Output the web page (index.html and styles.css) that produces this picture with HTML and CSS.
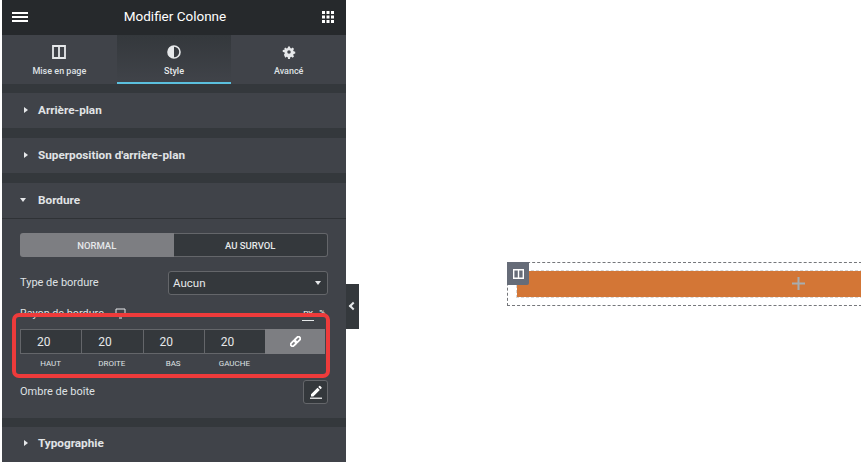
FILE: index.html
```html
<!DOCTYPE html>
<html lang="fr">
<head>
  <meta charset="UTF-8" />
  <meta name="viewport" content="width=device-width, initial-scale=1.0"/>
  <title>Modifier Colonne</title>
  <link rel="stylesheet" href="styles.css">
</head>
<body>

  <aside class="panel">
    <header class="panel-head">
      <svg class="head-icon" width="16" height="12" viewBox="0 0 16 12"><path d="M0 1h16v2H0zM0 5h16v2H0zM0 9h16v2H0z" fill="#fff"/></svg>
      <h1>Modifier Colonne</h1>
      <svg class="head-icon" width="12" height="12" viewBox="0 0 12 12" fill="#fff"><path d="M0 0h3v3H0zM4.500 0h3v3h-3zM9 0h3v3H9zM0 4.500h3v3H0zM4.500 4.500h3v3h-3zM9 4.500h3v3H9zM0 9h3v3H0zM4.500 9h3v3h-3zM9 9h3v3H9z"/></svg>
    </header>

    <nav class="tabs">
      <div class="tab">
        <svg width="14" height="14" viewBox="0 0 14 14"><path d="M1 1h12v12H1zM7 1v12" fill="none" stroke="#e6e8ea" stroke-width="1.800"/></svg>
        <span>Mise en page</span>
      </div>
      <div class="tab active">
        <svg width="14" height="14" viewBox="0 0 14 14"><circle cx="7" cy="7" r="6" fill="none" stroke="#e6e8ea" stroke-width="1.600"/><path d="M7 1a6 6 0 0 0 0 12z" fill="#e6e8ea"/></svg>
        <span>Style</span>
      </div>
      <div class="tab">
        <svg width="14" height="14" viewBox="0 0 14 14"><path d="M5.800 0h2.400l.4 2 1.300.6 1.800-1.100 1.600 1.700-1.100 1.700.6 1.300 2 .4v2.400l-2 .4-.6 1.300 1.100 1.700-1.600 1.700-1.800-1.100-1.300.6-.4 2H5.800l-.4-2-1.300-.6-1.800 1.100L.7 10.400l1.100-1.700-.6-1.300-2-.4V4.600l2-.4.600-1.300L.7 3.200l1.600-1.700 1.800 1.100 1.300-.6zM7 4.800a2.200 2.200 0 1 0 0 4.400 2.200 2.200 0 0 0 0-4.400z" fill="#e6e8ea" fill-rule="evenodd" transform="translate(1.400 1.400) scale(.8)"/></svg>
        <span>Avancé</span>
      </div>
    </nav>

    <section class="group">
      <div class="group-title"><i class="caret"></i>Arrière-plan</div>
    </section>

    <section class="group">
      <div class="group-title"><i class="caret"></i>Superposition d'arrière-plan</div>
    </section>

    <section class="group">
      <div class="group-title open"><i class="caret down"></i>Bordure</div>
      <div class="group-body">
        <div class="switch">
          <div class="switch-item on">NORMAL</div>
          <div class="switch-item">AU SURVOL</div>
        </div>

        <div class="row row-type">
          <label>Type de bordure</label>
          <div class="select">Aucun<i class="caret down"></i></div>
        </div>

        <div class="row row-radius">
          <label>Rayon de bordure</label>
          <svg width="11" height="11" viewBox="0 0 11 11"><path d="M1 1h9v7H1zM4 10h3" fill="none" stroke="#e6e8ea"/></svg>
          <span class="unit">PX</span>
          <span class="unit-alt">%</span>
        </div>

        <div class="dims">
          <div class="dim"><div class="dim-value">20</div><span>HAUT</span></div>
          <div class="dim"><div class="dim-value">20</div><span>DROITE</span></div>
          <div class="dim"><div class="dim-value">20</div><span>BAS</span></div>
          <div class="dim"><div class="dim-value">20</div><span>GAUCHE</span></div>
          <div class="dim-link">
            <svg width="11" height="11" viewBox="0 0 12 12"><g transform="rotate(-45 6 6)" fill="none" stroke="#fff" stroke-width="2"><rect x="-.5" y="4" width="7" height="4" rx="2"/><rect x="5.500" y="4" width="7" height="4" rx="2"/></g></svg>
          </div>
        </div>

        <div class="row row-shadow">
          <label>Ombre de boîte</label>
          <div class="edit-btn">
            <svg width="14" height="14" viewBox="0 0 14 14" fill="#fff"><path d="M2 9.200L8.500 2.700l2.300 2.300-6.500 6.500H2zM9.300 1.900l.9-.9a.7.7 0 0 1 1 0l1.300 1.300a.7.7 0 0 1 0 1l-.9.900z"/><path d="M1 12.600h12v1.200H1z"/></svg>
          </div>
        </div>
      </div>
    </section>

    <section class="group">
      <div class="group-title last"><i class="caret"></i>Typographie</div>
    </section>

    <div class="highlight"></div>
    <div class="collapse"><i></i></div>
  </aside>

  <main class="canvas">
    <div class="column">
      <div class="column-handle">
        <svg width="11" height="10" viewBox="0 0 11 10"><path d="M.7.700h9.600v8.600H.7zM5.500.700v8.600" fill="none" stroke="#fff" stroke-width="1.400"/></svg>
      </div>
      <div class="column-inner">
        <svg width="13" height="13" viewBox="0 0 13 13"><path d="M5.500 0h2v5.500H13v2H7.500V13h-2V7.500H0v-2h5.500z" fill="#a7adb0"/></svg>
      </div>
    </div>
  </main>

</body>
</html>
```

FILE: styles.css
```css
* {
  box-sizing: border-box;
}
html, body {
  margin: 0;
  height: 462px;
  overflow: hidden;
}
body {
  display: flex;
  background: #fff;
  font-family: Roboto, "Liberation Sans", sans-serif;
  color: #e6e8ea;
  padding-left: 2px;
}
.panel {
  position: relative;
  width: 344px;
  height: 462px;
  flex: none;
  background: #34383c;
}
.panel-head {
  height: 35px;
  background: #26292c;
  display: flex;
  align-items: center;
  justify-content: space-between;
  padding: 0 12px 1px 10px;
}
.panel-head h1 {
  margin: 0 0 2px;
  font-size: 13.500px;
  font-weight: 400;
  color: #fff;
}
.tabs {
  height: 49px;
  display: flex;
  background: #404349;
}
.tab {
  flex: 1;
  display: flex;
  flex-direction: column;
  align-items: center;
  padding-top: 10px;
  gap: 7px;
  font-size: 9px;
  font-weight: 500;
  color: #dfe1e4;
}
.tab.active {
  background: linear-gradient(#34383c, #404349);
  border-bottom: 2px solid #5bc0de;
  color: #e6e8ea;
}
.group {
  margin-top: 9px;
  background: #404349;
}
.group + .group {
  margin-top: 10px;
}
.group:last-of-type {
  margin-top: 9px;
}
.group-title {
  height: 35px;
  display: flex;
  align-items: center;
  padding: 0 0 2px 22px;
  font-size: 11.750px;
  font-weight: 700;
  color: #e0e3e6;
}
.group-title.open {
  height: 36px;
  border-bottom: 1px solid #2f3236;
}
.group-title.last {
  padding-bottom: 4px;
}
.caret {
  width: 0;
  height: 0;
  margin-right: 10px;
  border-style: solid;
  border-color: transparent;
  border-width: 3.500px 0 3.500px 4px;
  border-left-color: #e6e8ea;
}
.caret.down {
  margin-left: -4px;
  margin-right: 12px;
  border-width: 4px 3.500px 0 3.500px;
  border-color: #e6e8ea transparent transparent;
}
.group-body {
  height: 199px;
  padding: 14px 18px 0;
}
.switch {
  height: 24px;
  display: flex;
  font-size: 9.500px;
  font-weight: 500;
}
.switch-item {
  flex: 1;
  display: flex;
  align-items: center;
  justify-content: center;
  background: #34383c;
  border: 1px solid #64666a;
  border-left: 0;
  border-radius: 0 3px 3px 0;
}
.switch-item.on {
  background: #7d7e82;
  border: 0;
  border-radius: 3px 0 0 3px;
}
.row {
  display: flex;
  align-items: center;
  font-size: 11px;
  color: #dfe1e4;
}
.row-type label {
  padding-bottom: 1px;
}
.row-type {
  justify-content: space-between;
  margin-top: 14px;
}
.select {
  width: 160px;
  height: 24px;
  display: flex;
  align-items: center;
  justify-content: space-between;
  padding: 0 6px 1px 4px;
  background: #34383c;
  border: 1px solid #64666a;
  border-radius: 3px;
  font-size: 11.500px;
  color: #e6e8ea;
}
.select .caret {
  margin: 0;
}
.row-radius {
  gap: 11px;
  height: 14px;
  margin-top: 11px;
  font-size: 10.800px;
}
.row-radius .unit {
  margin-left: auto;
  margin-right: -6px;
  margin-bottom: -3px;
  padding: 0 1px 2px;
  border-bottom: 1px solid #e6e8ea;
  color: #fff;
  font-size: 8px;
  line-height: 9px;
}
.row-radius .unit-alt {
  margin-right: 3px;
  margin-bottom: 1px;
  color: #fff;
  font-size: 8px;
  line-height: 9px;
}
.dims {
  display: flex;
  margin-top: 9px;
  width: 305px;
}
.dim {
  width: 61.250px;
  font-size: 8px;
  text-align: center;
  color: #dfe1e4;
}
.dim span {
  display: block;
  margin-top: 4.500px;
}
.dim-value {
  height: 25px;
  display: flex;
  align-items: center;
  padding-left: 16px;
  background: #34383c;
  border: 1px solid #64666a;
  border-right: 0;
  font-size: 12px;
  color: #e6e8ea;
}
.dim-link {
  flex: 1;
  height: 25px;
  display: flex;
  align-items: center;
  justify-content: center;
  background: #7d7e82;
}
.row-shadow {
  justify-content: space-between;
  margin-top: 12px;
}
.edit-btn {
  width: 25px;
  height: 24px;
  display: flex;
  align-items: center;
  justify-content: center;
  background: #34383c;
  border: 1px solid #64666a;
  border-radius: 3px;
}
.highlight {
  position: absolute;
  left: 10px;
  top: 313px;
  width: 318px;
  height: 65px;
  border: 4px solid #ee3b3b;
  border-radius: 7px;
}
.collapse {
  position: absolute;
  left: 344px;
  top: 284px;
  width: 13px;
  height: 45px;
  background: #34383c;
  display: flex;
  align-items: flex-start;
  justify-content: center;
  padding-top: 19px;
}
.collapse i {
  width: 6px;
  height: 6px;
  border-left: 2px solid #e6e8ea;
  border-bottom: 2px solid #e6e8ea;
  transform: rotate(45deg);
  margin-left: 1px;
}
.canvas {
  flex: 1;
  min-width: 0;
  padding: 262px 0 0 161px;
}
.column {
  position: relative;
  height: 44px;
  margin-right: -1px;
  padding: 8px 0 9px 9px;
  border: 1px dashed #75777b;
  border-right: 0;
}
.column-handle {
  position: absolute;
  left: -1px;
  top: -1px;
  width: 22px;
  height: 23px;
  display: flex;
  align-items: center;
  justify-content: center;
  background: #666c78;
  border-radius: 0 0 2px 0;
}
.column-inner {
  height: 26px;
  display: flex;
  align-items: center;
  justify-content: center;
  padding: 0 0 1px 217px;
  background: #d37636;
  outline: 1px dashed #d6d6d6;
}
```
